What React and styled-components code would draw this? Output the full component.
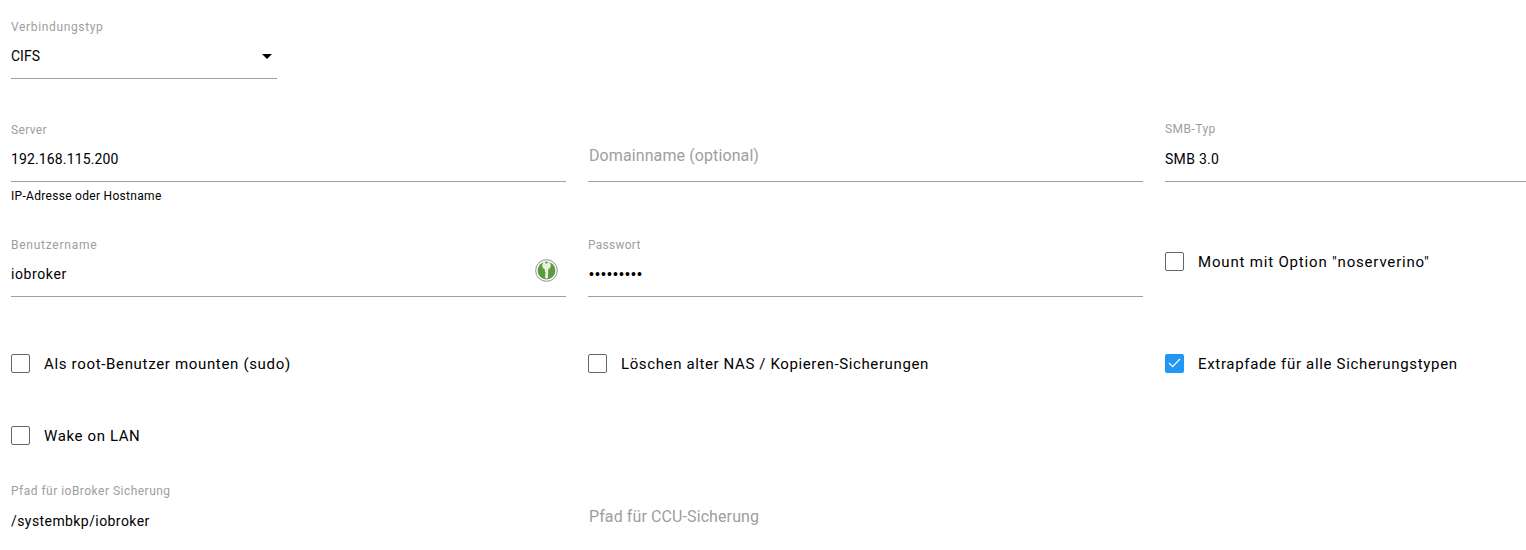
import React from 'react'
import styled, { createGlobalStyle } from 'styled-components'

const Global = createGlobalStyle`
  html, body { margin: 0; padding: 0; background: #fff; overflow: hidden; }
  body { font-family: Roboto, "Noto Sans", sans-serif; color: #000; }
`

const Page = styled.div`
  width: 1526px;
  height: 550px;
  overflow: hidden;
  box-sizing: border-box;
  padding: 20px 0 0 11px;
`

const SelectWrap = styled.div`
  width: 266px;
  margin-bottom: 44px;
`

const Row = styled.div`
  display: grid;
  grid-template-columns: 555px 555px 361px;
  column-gap: 22px;
  height: ${p => p.$h}px;
  align-items: start;
`

const Label = styled.div`
  font-size: 12px;
  line-height: 14px;
  color: #9e9e9e;
  letter-spacing: ${p => p.$ls ?? 0.45}px;
  margin: ${p => (p.$up ? '-1px 0 1px' : '0')};
`

const Input = styled.div`
  height: 44px;
  border-bottom: 1px solid #9e9e9e;
  display: flex;
  align-items: center;
  justify-content: space-between;
  font-size: 14px;
  letter-spacing: ${p => p.$ls ?? 0.5}px;
  color: #000;
  padding-right: ${p => p.$pr || 0}px;
`

const PathValue = styled.div`
  padding-top: 16px;
  font-size: 14px;
  line-height: 14px;
  letter-spacing: 0.42px;
  color: #000;
`

const Placeholder = styled.div`
  height: 59px;
  box-sizing: border-box;
  border-bottom: ${p => (p.$open ? 'none' : '1px solid #9e9e9e')};
  padding: 23px 0 0 1px;
  font-size: 16px;
  line-height: 19px;
  letter-spacing: 0.1px;
  color: #9e9e9e;
`

const Helper = styled.div`
  font-size: 12px;
  line-height: 14px;
  margin-top: 7px;
  letter-spacing: 0.3px;
  color: #000;
`

const Caret = styled.span`
  width: 0;
  height: 0;
  border-left: 5px solid transparent;
  border-right: 5px solid transparent;
  border-top: 5px solid #000;
`

const Dots = styled.span`
  font-family: "Liberation Sans", sans-serif;
  font-size: 14px;
  letter-spacing: 1.1px;
  padding-left: 1px;
`

const IconSlot = styled.span`
  display: flex;
  margin-bottom: 7px;
`

const CheckRow = styled.label`
  display: flex;
  align-items: center;
  height: 20px;
  padding-top: ${p => p.$top || 0}px;
`

const Box = styled.span`
  width: 19px;
  height: 19px;
  flex: none;
  box-sizing: border-box;
  border-radius: 2px;
  border: ${p => (p.$on ? 'none' : '1px solid #666')};
  background: ${p => (p.$on ? '#2196f3' : '#fff')};
  margin: 0 14px 2px 0;
  display: flex;
  align-items: center;
  justify-content: center;
`

const CheckText = styled.span`
  font-size: 15px;
  letter-spacing: ${p => p.$ls ?? 0.67}px;
  color: #000;
`

const KeyIcon = () => (
  <svg width="23" height="23" viewBox="0 0 24 24">
    <circle cx="12" cy="12" r="11.3" fill="#fff" stroke="#8a8a8a" strokeWidth="1" />
    <circle cx="12" cy="12" r="9.3" fill="#5c9a3c" />
    <path d="M8.8 3.4 L10.4 3 L12 5.2 L13.6 3 L15.2 3.4 C17.4 6 16.6 9.6 13.8 10.8 L13.6 19.4 L12 20.8 L10.4 19.4 L10.4 17.6 L11.2 16.8 L10.4 16 L10.4 15 L11.2 14.2 L10.4 13.4 L10.2 10.8 C7.4 9.6 6.6 6 8.8 3.4 Z" fill="#e8f1e2" />
  </svg>
)

const Check = ({ on, label, top, ls }) => (
  <CheckRow $top={top}>
    <Box $on={on}>
      {on && (
        <svg width="13" height="10" viewBox="0 0 13 10">
          <path d="M1 5 L4.6 8.6 L12 1" fill="none" stroke="#fff" strokeWidth="1.2" />
        </svg>
      )}
    </Box>
    <CheckText $ls={ls}>{label}</CheckText>
  </CheckRow>
)

export default function App() {
  return (
    <Page>
      <Global />
      <SelectWrap>
        <Label $ls={0.65}>Verbindungstyp</Label>
        <Input $pr={5} $ls={0}>
          CIFS
          <Caret />
        </Input>
      </SelectWrap>

      <Row $h={115}>
        <div>
          <Label $ls={0.33}>Server</Label>
          <Input $ls={0.13}>192.168.115.200</Input>
          <Helper>IP-Adresse oder Hostname</Helper>
        </div>
        <Placeholder>Domainname (optional)</Placeholder>
        <div>
          <Label $up>SMB-Typ</Label>
          <Input $ls={0.3}>SMB 3.0</Input>
        </div>
      </Row>

      <Row $h={116}>
        <div>
          <Label $ls={0.75}>Benutzername</Label>
          <Input $pr={8} $ls={0.6}>
            iobroker
            <IconSlot><KeyIcon /></IconSlot>
          </Input>
        </div>
        <div>
          <Label $ls={0.25}>Passwort</Label>
          <Input>
            <Dots>•••••••••</Dots>
          </Input>
        </div>
        <Check label={'Mount mit Option "noserverino"'} top={14} ls={0.82} />
      </Row>

      <Row $h={72}>
        <Check label="Als root-Benutzer mounten (sudo)" />
        <Check label="Löschen alter NAS / Kopieren-Sicherungen" ls={0.62} />
        <Check on label="Extrapfade für alle Sicherungstypen" />
      </Row>

      <Row $h={58}>
        <Check label="Wake on LAN" ls={0.62} />
      </Row>

      <Row $h={60}>
        <div>
          <Label $ls={0.48}>Pfad für ioBroker Sicherung</Label>
          <PathValue>/systembkp/iobroker</PathValue>
        </div>
        <Placeholder $open>Pfad für CCU-Sicherung</Placeholder>
      </Row>
    </Page>
  )
}
